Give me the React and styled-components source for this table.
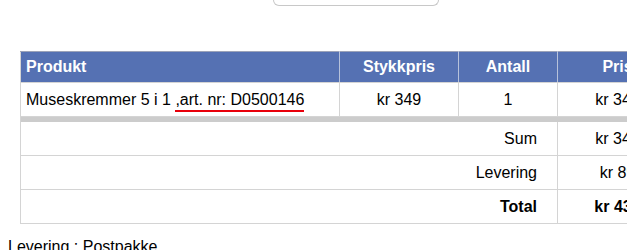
import React from "react";
import styled, { createGlobalStyle } from "styled-components";

const Global = createGlobalStyle`
  html, body {
    margin: 0;
    padding: 0;
    background: #ffffff;
    overflow: hidden;
  }
  body {
    font-family: "Liberation Sans", Arial, sans-serif;
    color: #000;
  }
`;

const Page = styled.div`
  padding: 0 8px;
  width: 720px;
`;

const SearchBox = styled.div`
  margin-left: 265px;
  width: 164px;
  height: 5px;
  border: 1px solid #c8c8c8;
  border-top: none;
  border-radius: 0 0 6px 6px;
  background: #fff;
`;

const CartTable = styled.table`
  margin: 45px 0 0 12px;
  border-collapse: collapse;
  width: 657px;
  font-size: 16px;
  line-height: 18px;
  table-layout: fixed;
  border: 1px solid #d4d4d4;
  border-top: 1px solid #9ca3b8;
`;

const HeadCell = styled.th`
  background: #5571b3;
  color: #fff;
  font-weight: bold;
  padding: 6px 5px 6px;
  text-align: ${(p) => (p.$left ? "left" : "center")};
  border-left: 1px solid #b7c2db;
  border-bottom: 1px solid #d4d4d4;
  &:first-child {
    border-left: none;
  }
`;

const Cell = styled.td`
  padding: 8px 5px 7px;
  text-align: ${(p) => p.$align || "center"};
  font-weight: ${(p) => (p.$bold ? "bold" : "normal")};
  border: 1px solid #d4d4d4;
  border-top: none;
`;

const LabelCell = styled(Cell)`
  text-align: right;
  padding-right: 20px;
`;

const Divider = styled.td`
  padding: 0;
  height: 5px;
  background: #cccccc;
`;

const ArticleNo = styled.span`
  border-bottom: 2px solid #e8000b;
  padding-bottom: 2px;
`;

const ShipNote = styled.div`
  margin-top: 14px;
  font-size: 16px;
  line-height: 18px;
`;

const totals = [
  { label: "Sum", value: "kr 349" },
  { label: "Levering", value: "kr 89" },
  { label: "Total", value: "kr 438", bold: true },
];

export default function App() {
  return (
    <>
      <Global />
      <Page>
        <SearchBox />
        <CartTable>
          <colgroup>
            <col style={{ width: 319 }} />
            <col style={{ width: 119 }} />
            <col style={{ width: 99 }} />
            <col style={{ width: 120 }} />
          </colgroup>
          <thead>
            <tr>
              <HeadCell $left>Produkt</HeadCell>
              <HeadCell>Stykkpris</HeadCell>
              <HeadCell>Antall</HeadCell>
              <HeadCell>Pris</HeadCell>
            </tr>
          </thead>
          <tbody>
            <tr>
              <Cell $align="left">
                Museskremmer 5 i 1 <ArticleNo>,art. nr: D0500146</ArticleNo>
              </Cell>
              <Cell>kr 349</Cell>
              <Cell>1</Cell>
              <Cell>kr 349</Cell>
            </tr>
            <tr>
              <Divider colSpan={4} />
            </tr>
            {totals.map((t) => (
              <tr key={t.label}>
                <LabelCell colSpan={3} $bold={t.bold}>
                  {t.label}
                </LabelCell>
                <Cell $bold={t.bold}>{t.value}</Cell>
              </tr>
            ))}
          </tbody>
        </CartTable>
        <ShipNote>Levering : Postpakke</ShipNote>
      </Page>
    </>
  );
}
